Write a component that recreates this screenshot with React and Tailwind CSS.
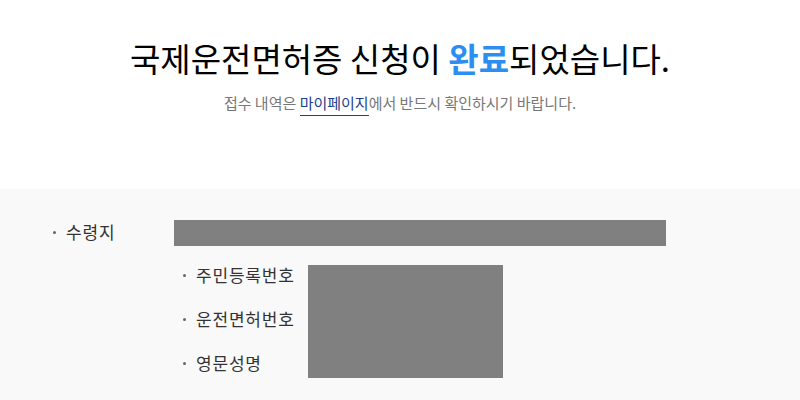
export default function App() {
  const font = { fontFamily: '"Noto Sans CJK KR", "Noto Sans", sans-serif' };

  return (
    <div className="w-[800px] h-[400px] overflow-hidden bg-white" style={font}>
      <div className="flex flex-col items-center pt-[33px] h-[189px]">
        <h1 className="text-[33px] leading-[50px] text-black">
          국제운전면허증 신청이 <span className="text-[#2b8ef0] font-bold">완료</span>되었습니다.
        </h1>
        <p className="mt-[9px] text-[15px] leading-[22px] text-[#777]">
          접수 내역은{' '}
          <span className="text-[#1a3f8c] border-b border-[#1a3f8c] pb-[2px]">마이페이지</span>
          에서 반드시 확인하시기 바랍니다.
        </p>
      </div>

      <div className="bg-[#f9f9f9] h-[211px] pt-[31px] pl-[53px] text-[17px] tracking-[0.8px] text-[#333]">
        <div className="flex items-start">
          <div className="w-[121px] flex items-center h-[24px]">
            <span className="w-[3px] h-[3px] rounded-full bg-[#666] mr-[10px]" />
            수령지
          </div>
          <div className="w-[492px] h-[26px] bg-[#808080]" />
        </div>

        <div className="flex items-start mt-[19px] ml-[130px]">
          <div className="w-[125px] flex flex-col gap-[20px] -mt-[2px]">
            {['주민등록번호', '운전면허번호', '영문성명'].map((label) => (
              <div key={label} className="flex items-center h-[24px]">
                <span className="w-[3px] h-[3px] rounded-full bg-[#666] mr-[10px]" />
                {label}
              </div>
            ))}
          </div>
          <div className="w-[195px] h-[113px] bg-[#808080]" />
        </div>
      </div>
    </div>
  );
}
